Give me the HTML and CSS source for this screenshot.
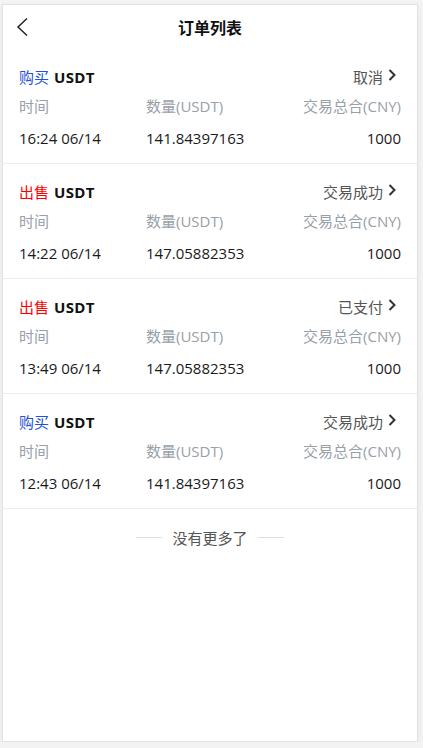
FILE: index.html
```html
<!DOCTYPE html>
<html lang="zh">
<head>
<meta charset="utf-8">
<title>订单列表</title>
<link rel="stylesheet" href="styles.css">
</head>
<body>
<div class="page">
  <header class="header">
    <svg class="back" width="12" height="20" viewBox="0 0 12 20"><path d="M11 1.5 L2 10 L11 18.5" fill="none" stroke="#222" stroke-width="1.5"/></svg>
    <h1 class="title">订单列表</h1>
  </header>

  <div class="order">
    <div class="row top">
      <div class="kind"><span class="buy">购买</span> <b>USDT</b></div>
      <div class="status">取消<svg class="chev" width="8" height="12" viewBox="0 0 8 12"><path d="M1.5 1 L6.5 6 L1.5 11" fill="none" stroke="#333" stroke-width="2"/></svg></div>
    </div>
    <div class="row labels"><span>时间</span><span>数量(USDT)</span><span>交易总合(CNY)</span></div>
    <div class="row values"><span>16:24 06/14</span><span>141.84397163</span><span>1000</span></div>
  </div>

  <div class="order">
    <div class="row top">
      <div class="kind"><span class="sell">出售</span> <b>USDT</b></div>
      <div class="status">交易成功<svg class="chev" width="8" height="12" viewBox="0 0 8 12"><path d="M1.5 1 L6.5 6 L1.5 11" fill="none" stroke="#333" stroke-width="2"/></svg></div>
    </div>
    <div class="row labels"><span>时间</span><span>数量(USDT)</span><span>交易总合(CNY)</span></div>
    <div class="row values"><span>14:22 06/14</span><span>147.05882353</span><span>1000</span></div>
  </div>

  <div class="order">
    <div class="row top">
      <div class="kind"><span class="sell">出售</span> <b>USDT</b></div>
      <div class="status">已支付<svg class="chev" width="8" height="12" viewBox="0 0 8 12"><path d="M1.5 1 L6.5 6 L1.5 11" fill="none" stroke="#333" stroke-width="2"/></svg></div>
    </div>
    <div class="row labels"><span>时间</span><span>数量(USDT)</span><span>交易总合(CNY)</span></div>
    <div class="row values"><span>13:49 06/14</span><span>147.05882353</span><span>1000</span></div>
  </div>

  <div class="order">
    <div class="row top">
      <div class="kind"><span class="buy">购买</span> <b>USDT</b></div>
      <div class="status">交易成功<svg class="chev" width="8" height="12" viewBox="0 0 8 12"><path d="M1.5 1 L6.5 6 L1.5 11" fill="none" stroke="#333" stroke-width="2"/></svg></div>
    </div>
    <div class="row labels"><span>时间</span><span>数量(USDT)</span><span>交易总合(CNY)</span></div>
    <div class="row values"><span>12:43 06/14</span><span>141.84397163</span><span>1000</span></div>
  </div>

  <div class="nomore"><i class="line"></i><span>没有更多了</span><i class="line"></i></div>
</div>
</body>
</html>
```

FILE: styles.css
```css
html, body { margin: 0; padding: 0; }
body {
  background: #f3f3f3;
  font-family: "Open Sans", "Noto Sans CJK SC", sans-serif;
  font-size: 15px;
  color: #1a1a1a;
}
.page {
  box-sizing: border-box;
  margin: 4px 5px 0 2px;
  height: 738px;
  background: #fff;
  border: 1px solid #e2e2e2;
  box-shadow: 0 2px 6px rgba(0,0,0,0.06);
}
.header {
  position: relative;
  height: 44px;
  display: flex;
  align-items: center;
  justify-content: center;
}
.back {
  position: absolute;
  left: 13px;
  top: 12px;
}
.title {
  margin: 0;
  font-size: 16px;
  font-weight: bold;
  line-height: 20px;
  color: #111;
  margin-top: 2px;
}
.order {
  padding: 18px 16px 15px;
  border-bottom: 1px solid #ececec;
}
.row {
  display: grid;
  grid-template-columns: 127px 1fr auto;
  line-height: 20px;
  height: 20px;
  white-space: nowrap;
}
.row.top {
  display: flex;
  justify-content: space-between;
  align-items: center;
}
.kind b { font-weight: bold; color: #111; margin-left: 1px; letter-spacing: 0.4px; }
.buy { color: #1d52d9; }
.sell { color: #f00; }
.status {
  color: #555;
  display: flex;
  align-items: center;
  margin-right: 5px;
}
.chev { margin-left: 5px; margin-top: -5px; }
.labels { margin-top: 9px; color: #98a0a8; }
.values { margin-top: 12px; color: #1a1a1a; }
.nomore {
  display: flex;
  justify-content: center;
  align-items: center;
  gap: 10px;
  height: 56px;
  color: #555;
}
.line {
  display: block;
  width: 26px;
  height: 1px;
  background: #e0e0e0;
}
```
